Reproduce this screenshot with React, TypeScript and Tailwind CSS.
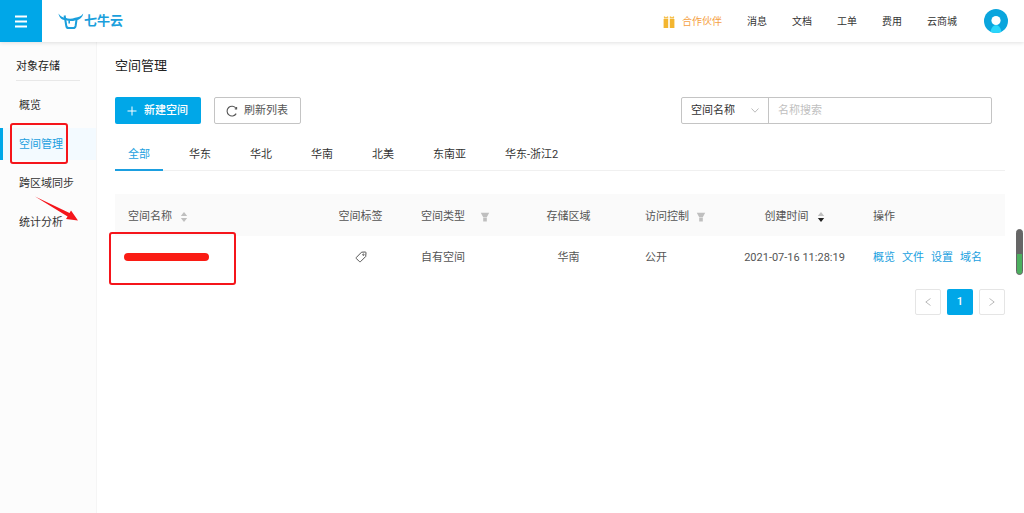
import React, { useState } from "react";

const navLinks = ["消息", "文档", "工单", "费用", "云商城"];
const sideItems = ["概览", "空间管理", "跨区域同步", "统计分析"];
const regions = ["全部", "华东", "华北", "华南", "北美", "东南亚", "华东-浙江2"];
const actions = ["概览", "文件", "设置", "域名"];

function Logo() {
  return (
    <svg viewBox="0 0 26 18" className="w-[26px] h-[18px]" fill="none" stroke="#1b9fdc">
      <path
        d="M0.5 1.5 C2.5 4.8 5 5.6 7.5 5.8 C10 7.2 14 7.2 17 5.8 C20.5 5.2 23.5 4.2 25.2 1.5 C24.6 5.6 21.5 8 17.8 8.2 C14 9.4 11 9.3 7.8 8.3 C4 8 1.2 5.8 0.5 1.5 Z"
        fill="#1b9fdc"
        stroke="none"
      />
      <path d="M6.6 3.5 L8.3 14 Q8.6 16 10.6 16 H15.4 Q17.2 16 17.6 14 L18.6 7" strokeWidth="2" />
      <path d="M11.2 8.5 V11.5" strokeWidth="1.6" />
    </svg>
  );
}

function Gift() {
  return (
    <svg viewBox="0 0 12 14" className="w-3 h-[14px]" fill="#f3b52f">
      <path d="M1 3.4 Q0.4 1.2 1.4 1.2 L3 2.2 L4.6 1.2 Q5.6 1.2 5.2 3.4 Z M6.8 3.4 Q6.4 1.2 7.4 1.2 L9 2.2 L10.6 1.2 Q11.6 1.2 11 3.4 Z" opacity="0.85" />
      <rect x="0.6" y="4" width="4.6" height="9" />
      <rect x="6.8" y="4" width="4.6" height="9" />
    </svg>
  );
}

function Avatar() {
  return (
    <svg viewBox="0 0 24 24" className="w-6 h-6">
      <circle cx="12" cy="12" r="12" fill="#0aa5dd" />
      <path d="M6.5 22.7 Q8 16 12 16 Q16 16 17.5 22.7 Q12 25.2 6.5 22.7 Z" fill="#2bd6fb" />
      <circle cx="12" cy="11.5" r="4.6" fill="#fff" />
    </svg>
  );
}

function Sorter({ desc = false }: { desc?: boolean }) {
  return (
    <svg viewBox="0 0 8 12" className="w-2 h-3">
      <path d="M4 1 L7.2 5 H0.8 Z" fill="#bfbfbf" />
      <path d="M4 11 L7.2 7 H0.8 Z" fill={desc ? "#222" : "#bfbfbf"} />
    </svg>
  );
}

function Filter() {
  return (
    <svg viewBox="0 0 10 10" className="w-[10px] h-[10px]" fill="#bfbfbf">
      <path d="M0.8 0.8 H9.2 L6.8 5.2 H3.2 Z M3.2 5.8 H6.8 V9.4 H3.2 Z" />
    </svg>
  );
}

function App() {
  const [region, setRegion] = useState("全部");
  const [keyword, setKeyword] = useState("");

  return (
    <div className="min-h-screen flex flex-col bg-white text-[11px] leading-4 text-[#333] font-[Roboto,'Noto_Sans_CJK_SC',sans-serif]">
      <header className="relative h-[42px] flex items-center bg-white shadow-[0_1px_4px_rgba(0,0,0,0.12)]">
        <button aria-label="菜单" className="w-[42px] h-[42px] flex items-center justify-center bg-[#00a7e8]">
          <svg viewBox="0 0 12 13" className="w-3 h-[13px]" fill="#fff">
            <path d="M0 0.5h12v2H0z M0 5.5h12v2H0z M0 10.5h12v2H0z" />
          </svg>
        </button>
        <a href="#" className="ml-4 flex items-center text-[13px] font-bold text-[#1b9fdc]">
          <Logo />
          七牛云
        </a>
        <nav className="ml-auto mr-4 flex items-center gap-[25px] text-[10px]">
          <a href="#" className="pt-px flex items-center gap-[7px] text-[#f5a142]">
            <Gift />
            合作伙伴
          </a>
          {navLinks.map((link) => (
            <a key={link} href="#" className="pt-px">
              {link}
            </a>
          ))}
          <button aria-label="账号" className="ml-[2px]">
            <Avatar />
          </button>
        </nav>
      </header>

      <div className="flex-1 flex">
        <aside className="w-[97px] shrink-0 bg-[#fcfcfc] border-r border-[#f5f5f5]">
          <h2 className="mx-4 pt-[17px] pb-[5px] border-b border-[#e8e8e8] whitespace-nowrap text-[#222]">
            对象存储
          </h2>
          <ul className="mt-2 flex flex-col gap-[7px]">
            {sideItems.map((item) => (
              <li
                key={item}
                className={`relative h-8 pt-[2px] flex items-center border-l-[3px] pl-4 ${
                  item === "空间管理"
                    ? "border-[#00a7e8] bg-[#f3faff] text-[#1b9fe0]"
                    : "border-transparent"
                }`}>
                <a href="#" className="whitespace-nowrap">
                  {item}
                </a>
                {item === "空间管理" && (
                  <div className="absolute left-[7px] -top-[5px] w-[58px] h-[41px] border-2 border-[#f5151b] rounded-[3px]" />
                )}
                {item === "统计分析" && (
                  <svg viewBox="0 0 44 26" className="absolute left-8 -top-[10px] w-11 h-[26px]" fill="#f5151b">
                    <path d="M0 0.5 L34.5 17 L36 14.6 L43 24.5 L31 23 L32.6 20.4 Z" />
                  </svg>
                )}
              </li>
            ))}
          </ul>
        </aside>

        <main className="flex-1 min-w-0 pl-[18px] pr-[19px] pt-[14px]">
          <h1 className="text-[13px] leading-5 text-[#222]">空间管理</h1>

          <div className="mt-[21px] pr-[13px] flex items-center gap-[13px]">
            <button className="h-[27px] pl-3 pr-[13px] pt-px flex items-center gap-[7px] rounded-[2px] bg-[#00a7e8] font-medium text-white">
              <svg viewBox="0 0 10 10" className="w-[10px] h-[10px]" stroke="#fff">
                <path d="M5 0.5V9.5M0.5 5H9.5" />
              </svg>
              新建空间
            </button>
            <button className="h-[27px] pl-[11px] pr-3 pt-px flex items-center gap-[6px] rounded-[2px] border border-[#c4c4c4] text-[#555]">
              <svg viewBox="0 0 12 12" className="w-3 h-3" fill="none" stroke="#555" strokeWidth="1.1">
                <path d="M10.2 8.6 A4.9 4.9 0 1 1 10 3.3" />
                <path d="M10.6 2 V3.9 H8.8" />
              </svg>
              刷新列表
            </button>
            <div className="ml-auto w-[311px] h-[27px] flex rounded-[2px] border border-[#c4c4c4]">
              <div className="relative w-[87px] border-r border-[#c4c4c4]">
                <select aria-label="搜索字段" className="w-full h-full pl-[9px] pt-px appearance-none outline-none">
                  <option>空间名称</option>
                </select>
                <svg viewBox="0 0 8 5" className="absolute right-[9px] top-[10px] w-2 h-[5px] pointer-events-none" fill="none" stroke="#bbb">
                  <path d="M0.5 0.5 L4 4.2 L7.5 0.5" />
                </svg>
              </div>
              <input
                type="text"
                aria-label="名称搜索"
                value={keyword}
                onChange={(e) => setKeyword(e.target.value)}
                placeholder="名称搜索"
                className="flex-1 min-w-0 px-[9px] pt-px outline-none placeholder:text-[#bfbfbf]"
              />
            </div>
          </div>

          <div className="mt-[13px] flex gap-[13px] border-b border-[#f0f0f0]">
            {regions.map((name) => (
              <button
                key={name}
                onClick={() => setRegion(name)}
                className={`-mb-px h-[34px] px-[13px] pt-1 border-b-2 whitespace-nowrap ${
                  region === name
                    ? "border-[#1b9fe0] text-[#1b9fe0]"
                    : "border-transparent"
                }`}>
                {name}
              </button>
            ))}
          </div>

          <table className="mt-[23px] w-full table-fixed text-[#555]">
            <colgroup>
              <col />
              <col className="w-[95px]" />
              <col className="w-[97px]" />
              <col className="w-[127px]" />
              <col className="w-[97px]" />
              <col className="w-[131px]" />
              <col className="w-[145px]" />
            </colgroup>
            <thead>
              <tr className="h-[42px] bg-[#fafafa] text-left whitespace-nowrap">
                <th className="px-[13px] pt-[3px] font-normal">
                  <span className="flex items-center gap-2">
                    空间名称
                    <Sorter />
                  </span>
                </th>
                <th className="px-[13px] pt-[3px] font-normal text-center">空间标签</th>
                <th className="px-[13px] pt-[3px] font-normal">
                  <span className="flex items-center gap-[15px]">
                    空间类型
                    <Filter />
                  </span>
                </th>
                <th className="px-[13px] pt-[3px] font-normal text-center">存储区域</th>
                <th className="px-[13px] pt-[3px] font-normal">
                  <span className="flex items-center gap-[7px]">
                    访问控制
                    <Filter />
                  </span>
                </th>
                <th className="px-[13px] pt-[3px] font-normal">
                  <span className="flex items-center justify-center gap-2">
                    创建时间
                    <Sorter desc />
                  </span>
                </th>
                <th className="px-[13px] pt-[3px] font-normal">操作</th>
              </tr>
            </thead>
            <tbody>
              <tr className="h-[42px] pt-px whitespace-nowrap">
                <td className="relative px-[9px]">
                  <div className="w-[85px] h-2 rounded-full bg-[#fa1c14]" />
                  <div className="absolute -left-[6px] -top-[4px] w-[127px] h-[53px] border-2 border-[#f5151b] rounded-[3px]" />
                </td>
                <td className="px-[13px]">
                  <svg viewBox="0 0 12 12" className="mx-auto w-3 h-3" fill="none" stroke="#555">
                    <path d="M6.5 1.2 L10.2 1 Q11 1 11 1.8 L10.7 5.5 L5.6 10.6 Q5 11.1 4.4 10.6 L1.4 7.6 Q0.9 7 1.4 6.4 Z" strokeLinejoin="round" />
                    <circle cx="8.4" cy="3.7" r="0.7" />
                  </svg>
                </td>
                <td className="px-[13px] pt-[2px]">自有空间</td>
                <td className="px-[13px] pt-[2px] text-center">华南</td>
                <td className="px-[13px] pt-[2px]">公开</td>
                <td className="pt-[2px] text-center">2021-07-16 11:28:19</td>
                <td className="px-[13px] pt-[2px]">
                  <div className="flex gap-[7px] text-[#1b9fe0]">
                    {actions.map((action) => (
                      <a key={action} href="#">
                        {action}
                      </a>
                    ))}
                  </div>
                </td>
              </tr>
            </tbody>
          </table>

          <div className="mt-[11px] flex justify-end gap-[6px]">
            <button aria-label="上一页" className="w-[26px] h-[26px] flex items-center justify-center rounded-[2px] border border-[#e5e5e5]">
              <svg viewBox="0 0 6 8" className="w-[6px] h-2" fill="none" stroke="#bbb">
                <path d="M5.5 0.5 L0.8 4 L5.5 7.5" />
              </svg>
            </button>
            <button className="w-[26px] h-[26px] rounded-[2px] bg-[#00a7e8] font-medium text-white">1</button>
            <button aria-label="下一页" className="w-[26px] h-[26px] flex items-center justify-center rounded-[2px] border border-[#e5e5e5]">
              <svg viewBox="0 0 6 8" className="w-[6px] h-2" fill="none" stroke="#bbb">
                <path d="M0.5 0.5 L5.2 4 L0.5 7.5" />
              </svg>
            </button>
          </div>
        </main>
      </div>

      {/* floating volume handle on the window edge */}
      <div className="fixed right-[1px] top-[229px] w-[7px] h-[46px] flex flex-col justify-end rounded-full overflow-hidden bg-[#666] border border-[#666]">
        <div className="h-5 bg-[#4caf5f]" />
      </div>
    </div>
  );
}

export default App;
